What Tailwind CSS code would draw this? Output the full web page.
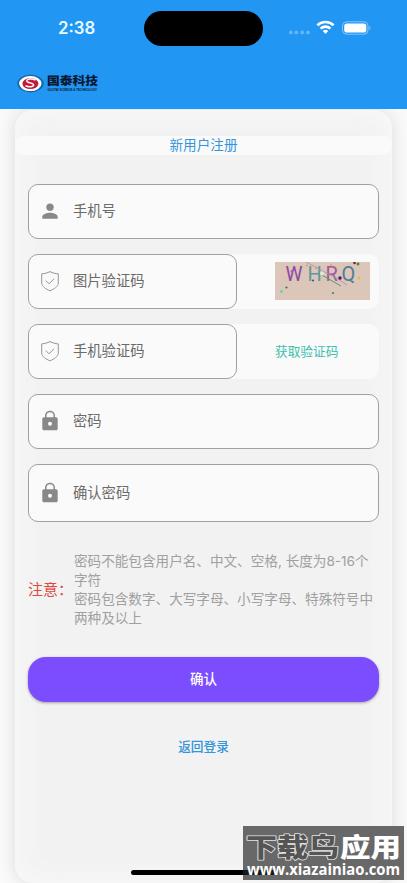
<!DOCTYPE html>
<html lang="zh-CN">
<head>
  <meta charset="UTF-8">
  <title>新用户注册</title>
  <script src="https://cdn.jsdelivr.net/npm/@tailwindcss/browser@4"></script>
</head>
<body class="w-[407px] h-[883px] overflow-hidden bg-[#fafafa] font-['Inter','Noto_Sans_CJK_SC',sans-serif]">
  <div class="relative flex flex-col h-[883px] overflow-hidden">

    <!-- status bar and app bar -->
    <header class="h-[109px] shrink-0 bg-[#2196f3] relative z-10">
      <div class="flex items-center h-[34px] pt-px mt-[11px]">
        <div class="w-[144px] pl-[58px] text-[16.8px] leading-none font-semibold text-[#e8fbff]">2:38</div>
        <div class="w-[119px] h-[35px] rounded-full bg-black shrink-0"></div>
        <svg class="ml-[25px] -mt-[2px]" width="84" height="18" viewBox="0 0 84 18">
          <g fill="#64b8f8">
            <circle cx="2.8" cy="13.4" r="1.9"/><circle cx="8.4" cy="13.4" r="1.9"/><circle cx="14.2" cy="13.4" r="1.9"/><circle cx="19.9" cy="13.4" r="1.9"/>
          </g>
          <g fill="none" stroke="#fff" stroke-width="2.6">
            <path d="M29.400 6.300a11.500 11.500 0 0 1 16.200 0"/>
            <path d="M32.600 9.600a7 7 0 0 1 9.800 0"/>
          </g>
          <path d="M34.800 12.100a4 4 0 0 1 5.400 0L37.500 15z" fill="#fff"/>
          <rect x="54.5" y="2.800" width="25.500" height="12.400" rx="4" fill="none" stroke="#86c6fa"/>
          <rect x="56.200" y="4.500" width="22.100" height="9" rx="2.600" fill="#fff"/>
          <path d="M81.300 7v4c1.600-.6 1.600-3.400 0-4z" fill="#86c6fa"/>
        </svg>
      </div>
      <div class="flex items-center mt-[28px] ml-[17px] gap-[3px]">
        <svg width="27" height="19" viewBox="0 0 27 19">
          <ellipse cx="13.5" cy="9.5" rx="13.2" ry="9" fill="#1769ae"/>
          <ellipse cx="13.3" cy="9.6" rx="11.2" ry="7.5" fill="#fff"/>
          <ellipse cx="13.4" cy="9.6" rx="8" ry="5.5" fill="#c3193a"/>
          <path d="M18.5 6.200c-4-2.200-9-1.200-8.700.9.3 2 6.700 1.600 6.800 3.700.1 2-4.400 2.600-8.100 1" fill="none" stroke="#fff" stroke-width="1.500"/>
        </svg>
        <svg class="overflow-visible" width="52" height="20" viewBox="0 0 52 20" fill="#0b1830">
          <text x="0" y="12.300" font-size="11.800" font-weight="900" textLength="51" lengthAdjust="spacingAndGlyphs" font-family="Noto Sans CJK SC">国泰科技</text>
          <text x="0.500" y="17.500" font-size="3" font-weight="700" textLength="49.500" lengthAdjust="spacingAndGlyphs" font-family="Liberation Sans">GUOTAI SCIENCE &amp; TECHNOLOGY</text>
        </svg>
      </div>
    </header>

    <!-- register card -->
    <main class="mx-[15px] mt-px flex-1 flex flex-col rounded-[18px] bg-[#f2f2f2] shadow-[0_0_18px_#00000021,inset_0_0_30px_#fafafa]">
      <h1 class="mt-[26px] h-[19px] rounded-[9px] bg-[#fafafa] text-center text-[13.600px] leading-[18px] text-[#3394da]">新用户注册</h1>

      <form class="mt-[29px] mx-[13px] flex flex-col gap-[15px] text-[14.300px] text-[#6b6b6b]">
        <div class="h-[55px] flex items-center rounded-[10px] border border-[#a0a0a0] bg-[#fafafa] pl-[9px] pb-[2px]">
          <svg width="24" height="24" viewBox="0 0 24 24" fill="#888"><path d="M12 12c2.100 0 3.800-1.700 3.800-3.800S14.100 4.400 12 4.400 8.200 6.100 8.200 8.200 9.900 12 12 12zm0 1.800c-2.600 0-7.700 1.300-7.700 3.900v2h15.400v-2c0-2.600-5.100-3.900-7.700-3.900z"/></svg>
          <span class="ml-[11px]">手机号</span>
        </div>

        <div class="h-[55px] flex rounded-[10px] bg-[#fafafa]">
          <div class="w-[209px] flex items-center rounded-[10px] border border-[#a0a0a0] pl-[9px] pb-[2px]">
            <svg width="24" height="24" viewBox="0 0 24 24" fill="none" stroke="#969696" stroke-width="1"><path d="M12 2.600c2.800 1.400 5.300 2 8.300 2.300v9.300c0 3.200-4.300 5.900-8.300 7.700-4-1.800-8.300-4.500-8.300-7.700V4.900c3-.3 5.500-.9 8.300-2.300zM7.800 11.600l3.200 3.200 5.200-5.100"/></svg>
            <span class="ml-[11px]">图片验证码</span>
          </div>
          <svg class="ml-[38px] mt-[8px]" width="95" height="38" viewBox="0 0 95 38">
            <rect width="95" height="38" fill="#dcc5b9"/>
            <g font-family="Roboto" font-size="20">
              <text x="10.500" y="19" fill="#8b4c9f" textLength="17" lengthAdjust="spacingAndGlyphs">W</text>
              <text x="32.500" y="19" fill="#5c9a9a">H</text>
              <text x="50.500" y="19" fill="#a05a9b">R</text>
              <text x="66.500" y="19" fill="#4c7f99">Q</text>
            </g>
            <path d="M31 0l32 17 9 6" stroke="#a991af" fill="none" stroke-width=".8"/>
            <path d="M45 12l21 12" stroke="#43a765"/>
            <circle cx="47" cy="11.500" r="2" fill="#e2ead0"/>
            <circle cx="17" cy="9.500" r="1.400" fill="#c54ddd"/>
            <circle cx="65" cy="16" r="1.700" fill="#5b087e"/>
            <circle cx="38" cy="18.500" r="1.100" fill="#3452c7"/>
            <circle cx="11.500" cy="25.500" r="1.100" fill="#4c6a4c"/>
            <circle cx="6.500" cy="29.500" r="1.500" fill="#68d4a0"/>
            <circle cx="58" cy="31" r="1.100" fill="#3b8a58"/>
            <circle cx="79.500" cy="1" r="1.300" fill="#6c2537"/>
            <circle cx="83" cy="2" r="1.400" fill="#4c7d35"/>
            <circle cx="84" cy="16" r="1.500" fill="#dec13f"/>
            <circle cx="50" cy="27" r="1.200" fill="#cdcf94"/>
            <circle cx="32" cy="3.500" r="1" fill="#b8aa55"/>
            <circle cx="41" cy="6" r="1" fill="#d59c66"/>
            <circle cx="56" cy="3" r=".8" fill="#d08b86"/>
          </svg>
        </div>

        <div class="h-[55px] flex rounded-[10px] bg-[#fafafa]">
          <div class="w-[209px] flex items-center rounded-[10px] border border-[#a0a0a0] pl-[9px] pb-[2px]">
            <svg width="24" height="24" viewBox="0 0 24 24" fill="none" stroke="#969696" stroke-width="1"><path d="M12 2.600c2.800 1.400 5.300 2 8.300 2.300v9.300c0 3.200-4.300 5.900-8.300 7.700-4-1.800-8.300-4.500-8.300-7.700V4.900c3-.3 5.500-.9 8.300-2.300zM7.800 11.600l3.200 3.200 5.200-5.100"/></svg>
            <span class="ml-[11px]">手机验证码</span>
          </div>
          <div class="ml-[38px] pt-px self-center text-[12.700px] text-[#3bbfae]">获取验证码</div>
        </div>

        <div class="h-[55px] flex items-center rounded-[10px] border border-[#a0a0a0] bg-[#fafafa] pl-[9px] pb-[2px]">
          <svg width="24" height="24" viewBox="0 0 24 24" fill="#888"><path d="M18 8.200h-1V6.700C17 4 14.800 1.800 12 1.800S7 4 7 6.700v1.500H6c-1 0-1.700.8-1.700 1.800v9.500c0 1 .7 1.800 1.700 1.800h12c1 0 1.700-.8 1.700-1.800V10c0-1-.7-1.800-1.700-1.800zm-6 8.500a2 2 0 1 1 0-4 2 2 0 0 1 0 4zM15.500 8.200h-7V6.700a3.500 3.500 0 0 1 7 0z"/></svg>
          <span class="ml-[11px]">密码</span>
        </div>

        <div class="h-[58px] flex items-center rounded-[10px] border border-[#a0a0a0] bg-[#fafafa] pl-[9px]">
          <svg width="24" height="24" viewBox="0 0 24 24" fill="#888"><path d="M18 8.200h-1V6.700C17 4 14.800 1.800 12 1.800S7 4 7 6.700v1.500H6c-1 0-1.700.8-1.700 1.800v9.500c0 1 .7 1.800 1.700 1.800h12c1 0 1.700-.8 1.700-1.800V10c0-1-.7-1.800-1.700-1.800zm-6 8.500a2 2 0 1 1 0-4 2 2 0 0 1 0 4zM15.500 8.200h-7V6.700a3.500 3.500 0 0 1 7 0z"/></svg>
          <span class="ml-[11px]">确认密码</span>
        </div>
      </form>

      <div class="mt-[30px] ml-[13px] flex items-center">
        <div class="w-[46px] text-[15px] text-[#dc4a40] whitespace-nowrap">注意：</div>
        <p class="text-[13.600px] leading-[19px] text-[#a0a0a0] whitespace-nowrap">密码不能包含用户名、中文、空格, 长度为8-16个<br>字符<br>密码包含数字、大写字母、小写字母、特殊符号中<br>两种及以上</p>
      </div>

      <button class="mt-[29px] mx-[13px] h-[45px] rounded-[18px] bg-[#7c4dff] text-[13.500px] font-medium text-white shadow-[0_1px_3px_#00000055]">确认</button>
      <a class="mt-[35px] text-center text-[12.700px] leading-[19px] font-medium text-[#3394da]">返回登录</a>
    </main>

    <!-- home indicator -->
    <div class="absolute left-[131px] top-[870px] w-[145px] h-[5px] rounded-full bg-black"></div>

    <!-- site watermark -->
    <svg class="absolute left-[243px] top-[826px]" width="161" height="54" viewBox="0 0 161 54">
      <rect width="161" height="54" fill="#686868"/>
      <rect y="44" width="33" height="5" fill="#181818"/>
      <g font-family="Noto Sans CJK SC" font-weight="900" font-size="26" stroke-linejoin="round">
        <text x="3" y="30.500" textLength="93" lengthAdjust="spacingAndGlyphs" fill="#555" stroke="#e4e4e4" stroke-width="1.600" paint-order="stroke">下载鸟</text>
        <text x="97" y="30.500" textLength="61" lengthAdjust="spacingAndGlyphs" fill="#fff">应用</text>
      </g>
      <text x="4" y="48.500" font-family="Open Sans" font-weight="700" font-size="15.500" textLength="153" lengthAdjust="spacingAndGlyphs" fill="#fff">www.xiazainiao.com</text>
    </svg>
  </div>
</body>
</html>
